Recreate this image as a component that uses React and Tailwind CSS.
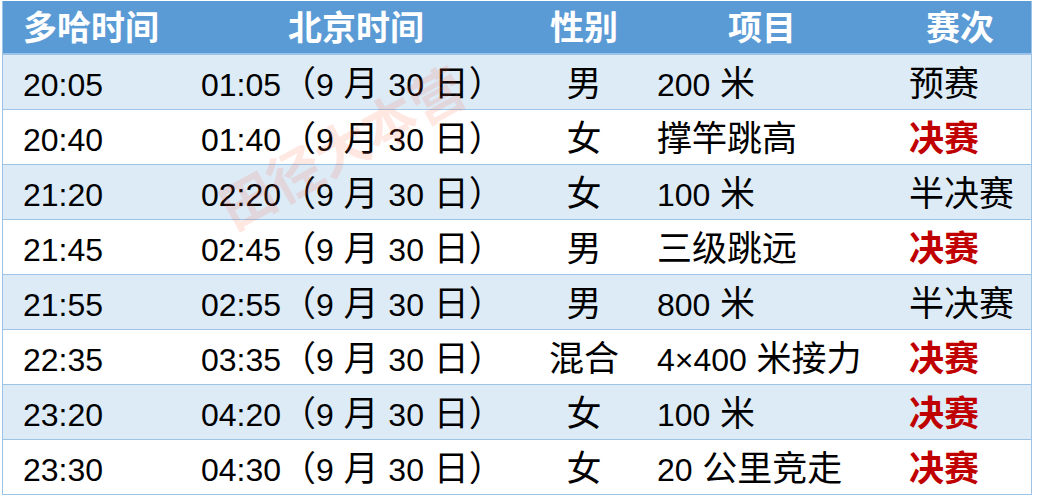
import React from 'react';

const rows = [
  { doha: '20:05', bj: '01:05', sex: '男', item: ['200', ' 米'], round: '预赛', final: false },
  { doha: '20:40', bj: '01:40', sex: '女', item: ['', '撑竿跳高'], round: '决赛', final: true },
  { doha: '21:20', bj: '02:20', sex: '女', item: ['100', ' 米'], round: '半决赛', final: false },
  { doha: '21:45', bj: '02:45', sex: '男', item: ['', '三级跳远'], round: '决赛', final: true },
  { doha: '21:55', bj: '02:55', sex: '男', item: ['800', ' 米'], round: '半决赛', final: false },
  { doha: '22:35', bj: '03:35', sex: '混合', item: ['4×400', ' 米接力'], round: '决赛', final: true },
  { doha: '23:20', bj: '04:20', sex: '女', item: ['100', ' 米'], round: '决赛', final: true },
  { doha: '23:30', bj: '04:30', sex: '女', item: ['20', ' 公里竞走'], round: '决赛', final: true },
];

const cols = 'grid grid-cols-[178px_350px_106px_250px_146px]';
const font = { fontFamily: '"Liberation Sans", "Noto Sans CJK SC", sans-serif' };

// latin runs are drawn a bit smaller than the CJK ones, like the Excel sheet
const Latin = ({ children }) => <span className="text-[32px]">{children}</span>;

export default function App() {
  return (
    <div className="w-[1038px] h-[500px] bg-white" style={font}>
      <div className="relative ml-[2px] mt-[1px] w-[1030px] border-x border-[#9dc3e6]">
        <div className={`${cols} h-[54px] pt-[2px] items-center bg-[#5b9bd5] text-white font-bold text-[34px] border-b-2 border-[#9dc3e6]`}>
          <div className="pl-[20px]">多哈时间</div>
          <div className="text-center">北京时间</div>
          <div className="text-center">性别</div>
          <div className="text-center">项目</div>
          <div className="text-center">赛次</div>
        </div>
        {rows.map((r, i) => (
          <div
            key={i}
            className={`${cols} h-[55px] pt-[3px] items-center text-[35px] text-black border-b border-[#9dc3e6] ${i % 2 === 0 ? 'bg-[#ddebf7]' : 'bg-white'}`}
          >
            <div className="pl-[20px]"><Latin>{r.doha}</Latin></div>
            <div className="pl-[20px] whitespace-nowrap">
              <Latin>{r.bj}</Latin>（<Latin>9</Latin> 月 <Latin>30</Latin> 日）
            </div>
            <div className="text-center">{r.sex}</div>
            <div className="pl-[20px] whitespace-nowrap">
              {r.item[0] && <Latin>{r.item[0]}</Latin>}
              {r.item[1]}
            </div>
            <div className={`pl-[22px] whitespace-nowrap ${r.final ? 'text-[#c00000] font-bold' : ''}`}>{r.round}</div>
          </div>
        ))}
        <div className="pointer-events-none absolute left-[205px] top-[108px] -rotate-[29deg] text-[54px] font-bold text-[#ff5a3c] opacity-[0.14] whitespace-nowrap">
          田径大本营
        </div>
      </div>
    </div>
  );
}
